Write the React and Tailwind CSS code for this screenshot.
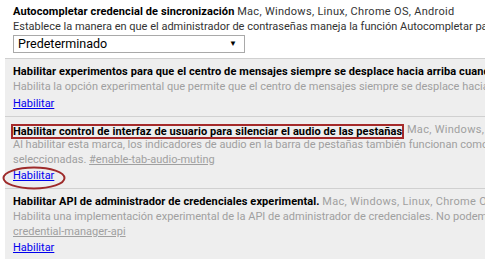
const font = { fontFamily: 'Roboto, "Liberation Sans", sans-serif' };

const Row = ({ children }) => (
  <div className="border-t border-[#d0d0d0] bg-[#eeeeee] pl-2 pt-[5px] pb-[5px]">
    {children}
  </div>
);

const Line = ({ children, className = '' }) => (
  <div className={`h-[15px] leading-[15px] whitespace-nowrap ${className}`}>{children}</div>
);

const Title = ({ children }) => (
  <span className="font-bold text-black tracking-[0.1px]">{children}</span>
);

const Platforms = ({ children, dark }) => (
  <span className={`tracking-[0.3px] ${dark ? 'text-[#333]' : 'text-[#a0a0a0]'}`}>{children}</span>
);

const Link = () => (
  <a href="#" className="text-[#0000ee] underline">Habilitar</a>
);

export default function App() {
  return (
    <div className="w-[485px] h-[259px] overflow-hidden bg-white text-[11px]" style={font}>
      <div className="ml-[5px] w-[900px]">
        {/* first experiment: white, with select */}
        <div className="pl-2 pt-[4px] pb-[5px] bg-white">
          <Line>
            <Title>Autocompletar credencial de sincronización</Title>{' '}
            <Platforms dark>Mac, Windows, Linux, Chrome OS, Android</Platforms>
          </Line>
          <Line className="h-[14px] text-[#333]">
            Establece la manera en que el administrador de contraseñas maneja la función Autocompletar para la sincronización.
          </Line>
          <div className="mt-[1px] w-[232px] h-[18px] border border-[#a9a9a9] bg-white flex items-center justify-between pl-1 pr-[7px]">
            <span className="text-[12.5px] leading-none text-black">Predeterminado</span>
            <span className="text-[8px] leading-none text-black">▼</span>
          </div>
        </div>

        <Row>
          <Line>
            <Title>Habilitar experimentos para que el centro de mensajes siempre se desplace hacia arriba cuando se muestra</Title>
          </Line>
          <Line className="text-[#a0a0a0]">
            Habilita la opción experimental que permite que el centro de mensajes siempre se desplace hacia arriba cuando se muestra.
          </Line>
          <Line className="mt-[2px]"><Link /></Line>
        </Row>

        <Row>
          <Line>
            <span className="inline-block -ml-[2px] border-2 border-[#a52a2a] leading-[11px] align-[-2px]">
              <Title>Habilitar control de interfaz de usuario para silenciar el audio de las pestañas</Title>
            </span>{' '}
            <Platforms>Mac, Windows, Linux, Chrome OS</Platforms>
          </Line>
          <Line className="text-[#a0a0a0]">
            Al habilitar esta marca, los indicadores de audio en la barra de pestañas también funcionan como controles de silencio de las pestañas
          </Line>
          <Line className="text-[#a0a0a0]">
            seleccionadas. <span className="underline">#enable-tab-audio-muting</span>
          </Line>
          <Line className="mt-[1px] relative">
            <Link />
            <svg className="absolute -left-[11px] -top-[2px]" width="64" height="24" viewBox="0 0 64 24">
              <ellipse cx="32" cy="12" rx="30.5" ry="10.5" fill="none" stroke="#9e2b2b" strokeWidth="2" />
            </svg>
          </Line>
        </Row>

        <Row>
          <Line>
            <Title>Habilitar API de administrador de credenciales experimental.</Title>{' '}
            <Platforms>Mac, Windows, Linux, Chrome OS, Android</Platforms>
          </Line>
          <Line className="text-[#a0a0a0]">
            Habilita una implementación experimental de la API de administrador de credenciales. No podemos asegurar que funcione. #enable-
          </Line>
          <Line className="text-[#a0a0a0]">
            <span className="underline">credential-manager-api</span>
          </Line>
          <Line className="mt-[1px]"><Link /></Line>
        </Row>
      </div>
    </div>
  );
}
